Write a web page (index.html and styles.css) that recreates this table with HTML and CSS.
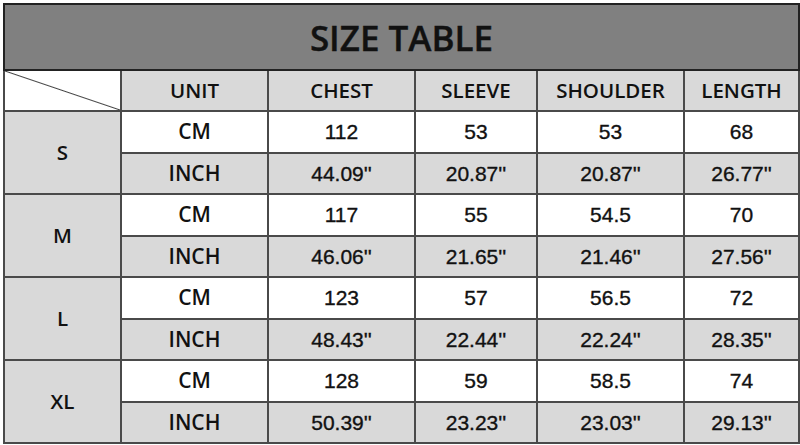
FILE: index.html
```html
<!DOCTYPE html>
<html>
<head>
<meta charset="utf-8">
<link rel="stylesheet" href="styles.css">
</head>
<body>
<table class="size-table">
  <colgroup>
    <col class="c-size"><col class="c-unit"><col class="c-chest"><col class="c-sleeve"><col class="c-shoulder"><col class="c-length">
  </colgroup>
  <tr class="title-row"><th colspan="6" class="title">SIZE TABLE</th></tr>
  <tr class="head-row">
    <th class="diag"></th>
    <th>UNIT</th><th>CHEST</th><th>SLEEVE</th><th>SHOULDER</th><th>LENGTH</th>
  </tr>
  <tr class="cm"><th rowspan="2" class="size">S</th><td class="unit">CM</td><td>112</td><td>53</td><td>53</td><td>68</td></tr>
  <tr class="inch"><td class="unit">INCH</td><td>44.09''</td><td>20.87''</td><td>20.87''</td><td>26.77''</td></tr>
  <tr class="cm"><th rowspan="2" class="size">M</th><td class="unit">CM</td><td>117</td><td>55</td><td>54.5</td><td>70</td></tr>
  <tr class="inch"><td class="unit">INCH</td><td>46.06''</td><td>21.65''</td><td>21.46''</td><td>27.56''</td></tr>
  <tr class="cm"><th rowspan="2" class="size">L</th><td class="unit">CM</td><td>123</td><td>57</td><td>56.5</td><td>72</td></tr>
  <tr class="inch"><td class="unit">INCH</td><td>48.43''</td><td>22.44''</td><td>22.24''</td><td>28.35''</td></tr>
  <tr class="cm"><th rowspan="2" class="size">XL</th><td class="unit">CM</td><td>128</td><td>59</td><td>58.5</td><td>74</td></tr>
  <tr class="inch"><td class="unit">INCH</td><td>50.39''</td><td>23.23''</td><td>23.03''</td><td>29.13''</td></tr>
</table>
</body>
</html>
```
FILE: styles.css
```css
html, body {
  margin: 0;
  padding: 0;
  background: #ffffff;
}
body {
  padding: 3px 0 0 3px;
}
.size-table {
  border-collapse: collapse;
  table-layout: fixed;
  width: 795px;
  border: 2px solid #222;
  font-family: "Liberation Sans", Arial, sans-serif;
  color: #111;
}
.c-size { width: 117px; }
.c-unit { width: 147px; }
.c-chest { width: 147px; }
.c-sleeve { width: 122px; }
.c-shoulder { width: 147px; }
.c-length { width: 115px; }

.size-table th, .size-table td {
  border: 2px solid #4a4a4a;
  text-align: center;
  vertical-align: middle;
  padding: 0;
  line-height: 1.1;
  font-size: 21px;
  font-weight: normal;
  -webkit-text-stroke: 0.35px #111;
}
.title-row th {
  height: 62px;
  padding-top: 2px;
  background: #808080;
  font-family: "Open Sans", "Noto Sans", sans-serif;
  font-size: 35px;
  font-weight: 600;
  color: #111;
  border-color: #222;
  -webkit-text-stroke: 0.4px #111;
}
.head-row th {
  height: 39px;
  background: #d9d9d9;
  font-family: "Open Sans", "Noto Sans", sans-serif;
  font-size: 20.5px;
  font-weight: 600;
  -webkit-text-stroke: 0;
}
.head-row th.diag {
  background: #ffffff linear-gradient(to top right, transparent calc(50% - 1px), #444 50%, transparent calc(50% + 1px));
}
.cm td, .inch td {
  height: 39.5px;
}
.cm td { background: #ffffff; }
.inch td { background: #d9d9d9; }
.size-table .size {
  background: #d9d9d9;
  font-family: "Open Sans", "Noto Sans", sans-serif;
  font-weight: 600;
  font-size: 20.5px;
  -webkit-text-stroke: 0;
}
.size-table .unit {
  font-family: "Open Sans", "Noto Sans", sans-serif;
  font-weight: 600;
  font-size: 21px;
  -webkit-text-stroke: 0;
}
```
